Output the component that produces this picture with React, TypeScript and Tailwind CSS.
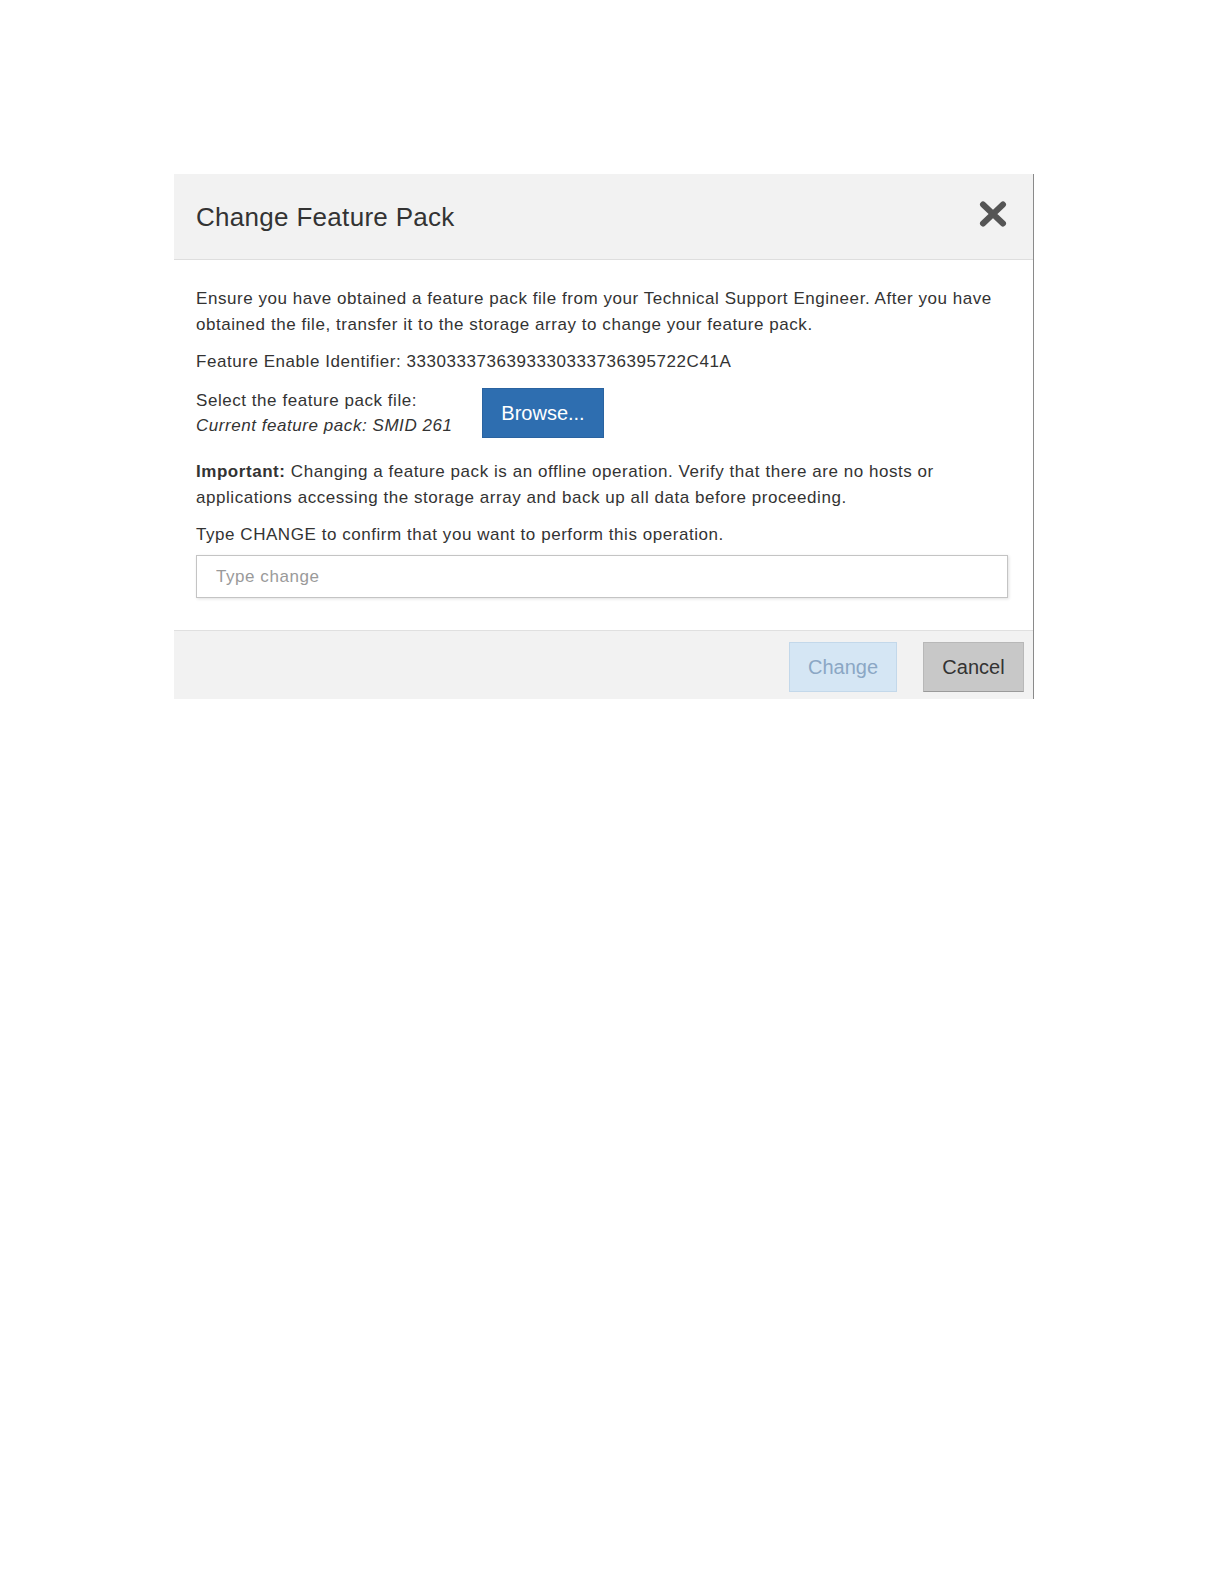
import React, { useState } from 'react';

const CloseIcon: React.FC = () => (
  <svg width="28" height="26" viewBox="0 0 28 26" aria-hidden="true">
    <path d="M4 3.5 L24 22.5 M24 3.5 L4 22.5" stroke="#555555" strokeWidth="6" strokeLinecap="round" />
  </svg>
);

const App: React.FC = () => {
  const [confirmText, setConfirmText] = useState('');

  return (
    <div className="min-h-screen bg-white pt-[174px] pl-[174px] text-[#333333]" style={{ fontFamily: '"Liberation Sans", Arial, sans-serif' }}>
      <div className="w-[860px] bg-white border-r border-[#8a8a8a]">
        {/* Header */}
        <div className="h-[86px] bg-[#f2f2f2] border-b border-[#dedede] flex items-center justify-between pl-[22px] pr-[26px]">
          <h2 className="text-[26px] leading-none tracking-[0.3px] text-[#333333]">Change Feature Pack</h2>
          <button className="flex items-center justify-center pb-[5px]">
            <CloseIcon />
          </button>
        </div>

        {/* Body */}
        <div className="pt-[26px] pb-[32px] pl-[22px] pr-[24px] text-[17px] leading-[26px] tracking-[0.55px]">
          <p className="whitespace-nowrap">
            Ensure you have obtained a feature pack file from your Technical Support Engineer. After you have
            <br />
            obtained the file, transfer it to the storage array to change your feature pack.
          </p>
          <p className="mt-[11px]">Feature Enable Identifier: 3330333736393330333736395722C41A</p>

          <div className="mt-[11px] flex items-start">
            <div className="w-[286px] pt-[2px] leading-[25px]">
              <p>Select the feature pack file:</p>
              <p className="italic">Current feature pack: SMID 261</p>
            </div>
            <button className="mt-[2px] w-[122px] h-[50px] bg-[#2e6eb0] border border-[#2a63a0] text-white text-[20px] leading-none tracking-normal">
              Browse...
            </button>
          </div>

          <p className="mt-[21px] whitespace-nowrap">
            <span className="font-bold">Important:</span> Changing a feature pack is an offline operation. Verify that there are no hosts or
            <br />
            applications accessing the storage array and back up all data before proceeding.
          </p>
          <p className="mt-[11px]">Type CHANGE to confirm that you want to perform this operation.</p>

          <input
            type="text"
            value={confirmText}
            onChange={(e) => setConfirmText(e.target.value)}
            placeholder="Type change"
            className="mt-[7px] w-[812px] h-[43px] border border-[#c4c4c4] shadow-[1px_1px_3px_rgba(0,0,0,0.12)] pl-[19px] text-[17px] placeholder:text-[#9a9a9a] focus:outline-none"
          />
        </div>

        {/* Footer */}
        <div className="h-[69px] bg-[#f2f2f2] border-t border-[#e0e0e0] flex items-start justify-end gap-[26px] pt-[11px] pr-[9px]">
          <button
            disabled={confirmText.toLowerCase() !== 'change'}
            className="w-[108px] h-[50px] bg-[#d5e6f4] border border-[#c3d8ea] text-[#8ba7c4] text-[20px] leading-none"
          >
            Change
          </button>
          <button className="w-[101px] h-[50px] bg-[#c8c8c8] border border-[#b8b8b8] border-b-[#9a9a9a] text-[#333333] text-[20px] leading-none">
            Cancel
          </button>
        </div>
      </div>
    </div>
  );
};

export default App;
